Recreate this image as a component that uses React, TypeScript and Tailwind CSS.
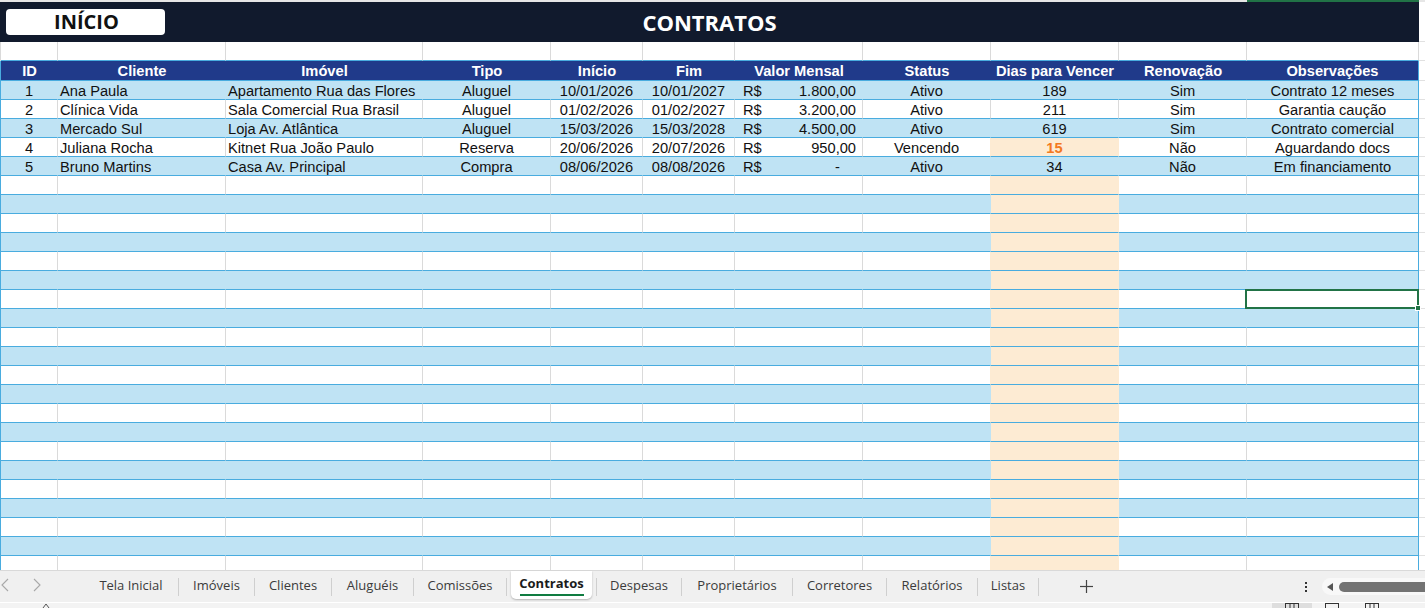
import React from 'react';

const W = ['w-[57px]', 'w-[168px]', 'w-[197px]', 'w-[128px]', 'w-[92px]', 'w-[92px]', 'w-[128px]', 'w-[128px]', 'w-[128px]', 'w-[128px]', 'w-[172px]'];
const HEADERS = ['ID', 'Cliente', 'Imóvel', 'Tipo', 'Início', 'Fim', 'Valor Mensal', 'Status', 'Dias para Vencer', 'Renovação', 'Observações'];

type Contrato = {
  id: string;
  cliente: string;
  imovel: string;
  tipo: string;
  inicio: string;
  fim: string;
  valor: string;
  status: string;
  dias: string;
  renov: string;
  obs: string;
};

const CONTRATOS: Contrato[] = [
  { id: '1', cliente: 'Ana Paula', imovel: 'Apartamento Rua das Flores', tipo: 'Aluguel', inicio: '10/01/2026', fim: '10/01/2027', valor: '1.800,00', status: 'Ativo', dias: '189', renov: 'Sim', obs: 'Contrato 12 meses' },
  { id: '2', cliente: 'Clínica Vida', imovel: 'Sala Comercial Rua Brasil', tipo: 'Aluguel', inicio: '01/02/2026', fim: '01/02/2027', valor: '3.200,00', status: 'Ativo', dias: '211', renov: 'Sim', obs: 'Garantia caução' },
  { id: '3', cliente: 'Mercado Sul', imovel: 'Loja Av. Atlântica', tipo: 'Aluguel', inicio: '15/03/2026', fim: '15/03/2028', valor: '4.500,00', status: 'Ativo', dias: '619', renov: 'Sim', obs: 'Contrato comercial' },
  { id: '4', cliente: 'Juliana Rocha', imovel: 'Kitnet Rua João Paulo', tipo: 'Reserva', inicio: '20/06/2026', fim: '20/07/2026', valor: '950,00', status: 'Vencendo', dias: '15', renov: 'Não', obs: 'Aguardando docs' },
  { id: '5', cliente: 'Bruno Martins', imovel: 'Casa Av. Principal', tipo: 'Compra', inicio: '08/06/2026', fim: '08/08/2026', valor: '-', status: 'Ativo', dias: '34', renov: 'Não', obs: 'Em financiamento' },
];

const TABS = [
  { name: 'Tela Inicial', w: 'w-[94px]' },
  { name: 'Imóveis', w: 'w-[75px]' },
  { name: 'Clientes', w: 'w-[76px]' },
  { name: 'Aluguéis', w: 'w-[81px]' },
  { name: 'Comissões', w: 'w-[92px]' },
  { name: 'Contratos', w: 'w-[89px]', active: true },
  { name: 'Despesas', w: 'w-[84px]' },
  { name: 'Proprietários', w: 'w-[110px]' },
  { name: 'Corretores', w: 'w-[93px]' },
  { name: 'Relatórios', w: 'w-[90px]' },
  { name: 'Listas', w: 'w-[60px]' },
];

const TOTAL_ROWS = 26;

function GridRow({ r }: { r: number }) {
  const data = CONTRATOS[r - 1];
  const blue = r % 2 === 1;
  const peach = r === 4 || r >= 6;
  const base = blue ? 'bg-[#bfe3f4]' : 'bg-white';

  const cellBg = (i: number) => (i === 8 && peach ? 'bg-[#fdebd3]' : base);
  const cellBorder = (i: number) => {
    if (i === 10) return 'border-[#49acdf]';
    if (blue) return i === 8 && peach ? 'border-[#fdebd3]' : 'border-[#bfe3f4]';
    if (i === 8 && peach) return 'border-[#fdebd3]';
    if (i === 7 && peach) return 'border-[#fdebd3]';
    return 'border-[#dadada]';
  };

  const content = (i: number) => {
    if (!data) return null;
    switch (i) {
      case 0:
        return <span className="block text-center">{data.id}</span>;
      case 1:
        return <span className="block pl-[2px]">{data.cliente}</span>;
      case 2:
        return <span className="block pl-[2px]">{data.imovel}</span>;
      case 3:
        return <span className="block text-center">{data.tipo}</span>;
      case 4:
        return <span className="block text-center">{data.inicio}</span>;
      case 5:
        return <span className="block text-center">{data.fim}</span>;
      case 6:
        return (
          <span className={`flex justify-between pl-[8px] ${data.valor === '-' ? 'pr-[22px]' : 'pr-[6px]'}`}>
            <span>R$</span>
            <span>{data.valor}</span>
          </span>
        );
      case 7:
        return <span className="block text-center">{data.status}</span>;
      case 8:
        return data.dias === '15' ? (
          <span className="block text-center font-bold text-[#f47920]">{data.dias}</span>
        ) : (
          <span className="block text-center">{data.dias}</span>
        );
      case 9:
        return <span className="block text-center">{data.renov}</span>;
      case 10:
        return <span className="block text-center">{data.obs}</span>;
    }
    return null;
  };

  return (
    <div className="flex h-[19px] shrink-0">
      <div className="w-[1px] h-[19px] bg-[#49acdf]" />
      {W.map((w, i) => (
        <div
          key={i}
          className={`${w} relative h-[19px] border-r border-b border-b-[#49acdf] ${cellBorder(i)} ${cellBg(i)} pt-[2px] leading-[16px] whitespace-nowrap`}
        >
          {content(i)}
          {r === 12 && i === 10 && (
            <div className="absolute z-10 left-[-2px] top-[-1px] right-[-1px] bottom-[-1px] border-2 border-[#217346]">
              <div className="absolute right-[-4px] bottom-[-4px] w-[6px] h-[6px] bg-[#217346] border border-white" />
            </div>
          )}
        </div>
      ))}
      <div className="w-[6px] h-[19px] border-b border-[#e1e1e1] bg-white" />
    </div>
  );
}

function Chevron({ dir }: { dir: 'l' | 'r' }) {
  return (
    <svg width="8" height="14" viewBox="0 0 8 14" fill="none" stroke="#a8a8a8" strokeWidth="1.1">
      {dir === 'l' ? <polyline points="7,1 1,7 7,13" /> : <polyline points="1,1 7,7 1,13" />}
    </svg>
  );
}

export default function App() {
  return (
    <div className="w-[1425px] h-[608px] overflow-hidden bg-white flex flex-col font-['Liberation_Sans',Arial,sans-serif] text-[14.67px] text-[#111]">
      {/* grid */}
      <div className="h-[570px] overflow-hidden flex flex-col shrink-0">
        {/* partially hidden top row */}
        <div className="flex h-[2px] shrink-0 bg-[#e6e6e6]">
          <div className="w-[1247px]" />
          <div className="w-[172px] bg-[#217346]" />
        </div>

        {/* title band */}
        <div className="flex h-[40px] shrink-0">
          <div className="w-[1419px] bg-[#111a2d] relative flex items-center justify-center">
            <button className="absolute left-[6px] top-[7px] w-[159px] h-[26px] rounded-[4px] bg-white flex items-center justify-center font-['Open_Sans',sans-serif] font-bold text-[20px] leading-none text-[#111] pl-[2px]">
              INÍCIO
            </button>
            <span className="font-['Open_Sans',sans-serif] font-bold text-[22px] leading-none text-white">CONTRATOS</span>
          </div>
          <div className="w-[6px] border-b border-[#e1e1e1]" />
        </div>

        {/* blank row */}
        <div className="flex h-[19px] shrink-0">
          <div className="w-[1px] bg-[#dadada]" />
          {W.map((w, i) => (
            <div key={i} className={`${w} h-[19px] border-r border-r-[#dadada] border-b border-b-[#49acdf]`} />
          ))}
          <div className="w-[6px] border-b border-[#e1e1e1]" />
        </div>

        {/* header row */}
        <div className="flex h-[20px] shrink-0">
          <div className="w-[1px] bg-[#49acdf]" />
          {W.map((w, i) => (
            <div
              key={i}
              className={`${w} h-[20px] bg-[#203a8a] border-b border-[#49acdf] ${i === 10 ? 'border-r' : ''} pt-[2px] leading-[17px] text-center font-bold text-white whitespace-nowrap`}
            >
              {HEADERS[i]}
            </div>
          ))}
          <div className="w-[6px] border-b border-[#e1e1e1]" />
        </div>

        {Array.from({ length: TOTAL_ROWS }, (_, k) => (
          <GridRow key={k} r={k + 1} />
        ))}
      </div>

      {/* sheet tabs */}
      <div className="h-[32px] shrink-0 flex items-center bg-[#f0f0f0] border-t border-[#d9d9d9] font-['Open_Sans',sans-serif] text-[13px] text-[#3b3b3b]">
        <div className="w-[84px] h-full flex items-center pl-[1px] gap-[24px] pb-[4px]">
          <Chevron dir="l" />
          <Chevron dir="r" />
        </div>
        {TABS.map((t) => (
          <React.Fragment key={t.name}>
            {t.active ? (
              <div className={`${t.w} h-full flex justify-center`}>
                <div className="w-[81px] h-[28px] bg-white rounded-b-[5px] shadow-[0_1px_2px_rgba(0,0,0,0.25)] flex flex-col items-center pt-[3px]">
                  <span className="font-bold text-[#1b1b1b] leading-[18px]">{t.name}</span>
                  <div className="w-[64px] h-[2px] bg-[#107c41] mt-[2px]" />
                </div>
              </div>
            ) : (
              <div className={`${t.w} h-full flex items-center justify-center pb-[1px] whitespace-nowrap`}>{t.name}</div>
            )}
            <div className="w-[1px] h-[18px] bg-[#cfcfcf]" />
          </React.Fragment>
        ))}
        <div className="w-[27px]" />
        <div className="w-[40px] flex items-center justify-center">
          <svg width="13" height="13" viewBox="0 0 13 13" stroke="#444" strokeWidth="1.2">
            <line x1="6.5" y1="0" x2="6.5" y2="13" />
            <line x1="0" y1="6.5" x2="13" y2="6.5" />
          </svg>
        </div>
        <div className="w-[190px]" />
        <div className="w-[20px] flex flex-col items-center gap-[2px]">
          <div className="w-[2px] h-[2px] bg-[#333]" />
          <div className="w-[2px] h-[2px] bg-[#333]" />
          <div className="w-[2px] h-[2px] bg-[#333]" />
        </div>
        <div className="w-[6px]" />
        <div className="flex-1 h-[17px] rounded-l-full bg-[#f8f8f8] flex items-center pl-[5px] gap-[6px]">
          <svg width="6" height="8" viewBox="0 0 6 8">
            <polygon points="6,0 0,4 6,8" fill="#555" />
          </svg>
          <div className="flex-1 h-[10px] rounded-l-full bg-[#737373]" />
        </div>
      </div>

      {/* status bar (cut off) */}
      <div className="h-[6px] shrink-0 flex bg-[#f3f3f3] border-t border-white overflow-hidden">
        <div className="w-[42px]" />
        <svg width="8" height="5" viewBox="0 0 8 5">
          <polyline points="1,5 4,1 7,5" fill="none" stroke="#555" strokeWidth="1" />
        </svg>
        <div className="w-[1222px]" />
        <div className="w-[40px] bg-[#dedede] flex justify-center">
          <svg width="14" height="5" viewBox="0 0 14 5" stroke="#333" strokeWidth="1" fill="none">
            <line x1="0" y1="0.5" x2="14" y2="0.5" />
            <line x1="0.5" y1="0" x2="0.5" y2="5" />
            <line x1="5" y1="0" x2="5" y2="5" />
            <line x1="9" y1="0" x2="9" y2="5" />
            <line x1="13.5" y1="0" x2="13.5" y2="5" />
          </svg>
        </div>
        <div className="w-[13px]" />
        <svg width="14" height="5" viewBox="0 0 14 5" stroke="#333" strokeWidth="1" fill="none">
          <line x1="0" y1="0.5" x2="14" y2="0.5" />
          <line x1="0.5" y1="0" x2="0.5" y2="5" />
          <line x1="13.5" y1="0" x2="13.5" y2="5" />
        </svg>
        <div className="w-[26px]" />
        <svg width="14" height="5" viewBox="0 0 14 5" stroke="#333" strokeWidth="1" fill="none">
          <line x1="0" y1="0.5" x2="14" y2="0.5" />
          <line x1="0.5" y1="0" x2="0.5" y2="5" />
          <line x1="5" y1="0" x2="5" y2="5" />
          <line x1="9" y1="0" x2="9" y2="5" />
          <line x1="13.5" y1="0" x2="13.5" y2="5" />
        </svg>
      </div>
    </div>
  );
}
